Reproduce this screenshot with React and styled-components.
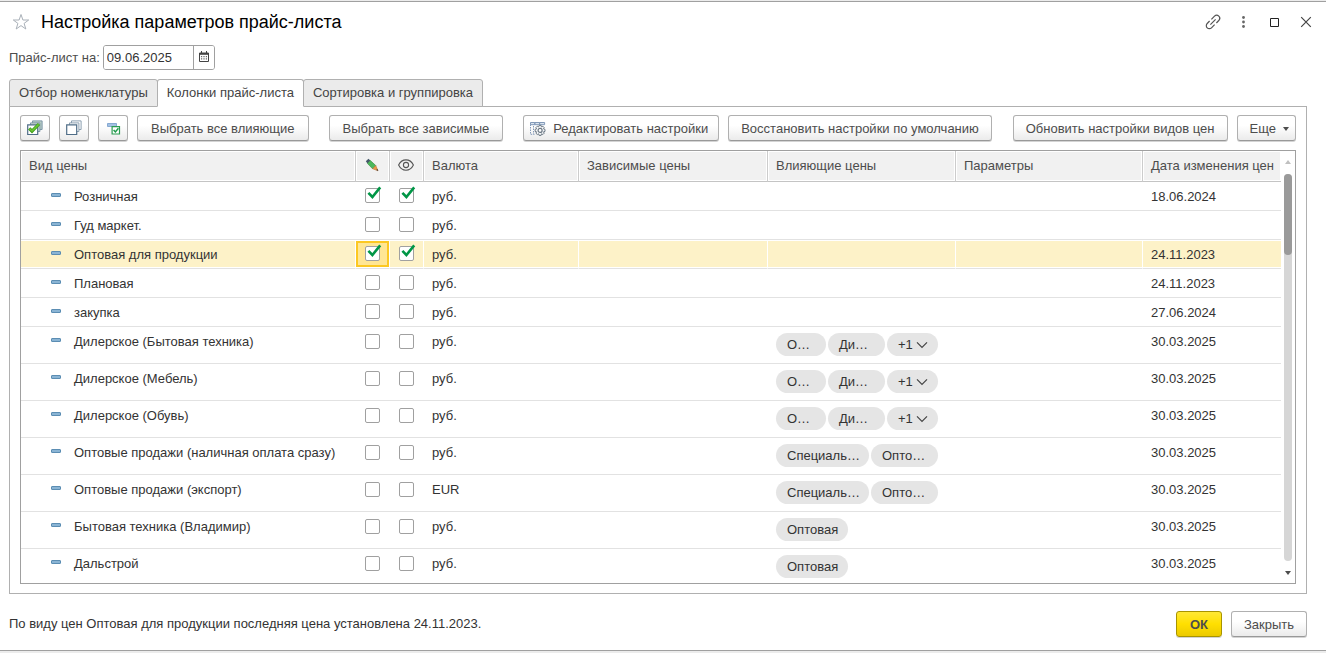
import React, { useState } from "react";
import styled, { createGlobalStyle, css } from "styled-components";

const Global = createGlobalStyle`
  *, *::before, *::after { box-sizing: border-box; }
  body {
    margin: 0;
    background: #ececec;
    color: #333;
    font: 13px/16px "Liberation Sans", Arial, sans-serif;
  }
  button, input { font: inherit; color: inherit; margin: 0; }
`;

const Window = styled.main`
  margin-top: 1px;
  padding: 0 19px 12px 9px;
  background: #fff;
  border-top: 1px solid #a0a0a0;
  border-bottom: 1px solid #a0a0a0;
`;

const TitleBar = styled.header`
  display: flex;
  align-items: center;
  height: 43px;
  margin-right: -9px;
  padding: 0 0 3px 1px;
  gap: 10px;
`;

const Title = styled.h1`
  flex: 1;
  margin: 0;
  font-size: 18px;
  line-height: 22px;
  font-weight: 400;
  color: #000;
`;

const IconButton = styled.button`
  display: flex;
  align-items: center;
  justify-content: center;
  width: 21px;
  height: 22px;
  padding: 0;
  border: 0;
  background: none;
  color: #444;
`;

const DateRow = styled.div`
  display: flex;
  align-items: center;
  gap: 3px;
  color: #4d4d4d;
`;

const DateField = styled.div`
  display: flex;
  width: 112px;
  height: 25px;
  border: 1px solid #a0a0a0;
  border-radius: 3px;
  overflow: hidden;
`;

const DateInput = styled.input`
  flex: 1;
  min-width: 0;
  padding: 0 3px;
  border: 0;
  outline: 0;
  color: #333;
`;

const DateButton = styled.button`
  display: flex;
  align-items: center;
  justify-content: center;
  width: 21px;
  padding: 0 0 2px;
  border: 0;
  border-left: 1px solid #a0a0a0;
  background: #fff;
`;

const Tabs = styled.div`
  display: flex;
  margin-top: 9px;
`;

const Tab = styled.button`
  height: 28px;
  margin-bottom: -1px;
  padding: 0 9px;
  border: 1px solid #b0b0b0;
  border-radius: 3px 3px 0 0;
  background: #ebebeb;
  color: #444;
  & + & { margin-left: -1px; }
  ${(p) => p.$active && css`
    position: relative;
    background: #fff;
    border-bottom-color: #fff;
  `}
`;

const Panel = styled.section`
  padding: 8px 10px 9px;
  border: 1px solid #b0b0b0;
`;

const Toolbar = styled.div`
  display: flex;
  gap: 20px;
  margin-bottom: 9px;
`;

const Group = styled.div`
  display: flex;
  gap: 9px;
  &:last-child { margin-left: auto; }
`;

const buttonPadding = {
  text: "1px 13px 0",
  wide: "1px 12px 0",
  icon: "0 6px",
  iconText: "1px 10px 0 6px",
  menu: "1px 6px 0 12px",
};

const Button = styled.button`
  display: flex;
  align-items: center;
  justify-content: center;
  gap: 7px;
  height: 26px;
  padding: ${(p) => buttonPadding[p.$kind || "text"]};
  border: 1px solid #b0b0b0;
  border-bottom-color: #999;
  border-radius: 3px;
  background: linear-gradient(#fff 40%, #ebebeb);
  box-shadow: 0 1px 0 #d4d4d4;
  color: #4d4d4d;
  white-space: nowrap;
  ${(p) => p.$primary && css`
    border-color: #a89400;
    background: linear-gradient(#ffe836, #ffdf00 50%, #ecca00);
    font-weight: 700;
  `}
`;

const TableFrame = styled.div`
  display: flex;
  border: 1px solid #a0a0a0;
`;

const Table = styled.table`
  flex: 1;
  width: 0;
  table-layout: fixed;
  border-collapse: separate;
  border-spacing: 0;
`;

const Head = styled.th`
  height: 31px;
  padding: 0 8px;
  border-right: 1px solid #ccc;
  border-bottom: 1px solid #c4c4c4;
  background: #f1f1f1;
  box-shadow: inset 0 0 0 1px #fff;
  color: #4d4d4d;
  font-weight: 400;
  text-align: left;
  white-space: nowrap;
  &:last-child { border-right: 0; }
  svg { display: block; margin: 0 auto; }
  ${(p) => p.$icon && css`padding: 0 2px 3px 0;`}
`;

const cellPadding = {
  text: "7px 8px 0",
  chips: "6px 8px 0",
  check: "6px 9px 0",
  checkTall: "7px 9px 0",
};

const Cell = styled.td`
  padding: ${(p) => cellPadding[p.$kind || "text"]};
  border-bottom: 1px solid #e2e2e2;
  vertical-align: top;
  white-space: nowrap;
`;

const Row = styled.tr`
  height: ${(p) => (p.$tall ? 37 : 29)}px;
  ${(p) => p.$selected && css`
    ${Cell} {
      background: #fdf2c8;
      border-right: 1px solid #fff;
      box-shadow: inset 0 1px #fff, inset 0 -1px #fff;
    }
    ${Cell}:nth-child(2) {
      background: #ffe694;
      box-shadow: inset 0 1px #fff, inset 0 -1px #fff, inset 2px 0 #fcc822,
        inset -2px 0 #fcc822, inset 0 3px #fcc822, inset 0 -3px #fcc822;
    }
    ${Cell}:last-child { border-right: 0; }
  `}
  &:last-child { height: 34px; }
  &:last-child ${Cell} { border-bottom: 0; }
`;

const NameLine = styled.div`
  display: flex;
  padding-left: 22px;
  gap: 13px;
`;

const Dash = styled.i`
  width: 10px;
  height: 4px;
  margin-top: 4px;
  border: 1px solid #5b8db3;
  border-radius: 1px;
  background: #8ab4d4;
`;

const CheckWrap = styled.label`
  display: block;
  position: relative;
  width: 15px;
  height: 15px;
  svg {
    position: absolute;
    left: 2px;
    top: -2px;
    pointer-events: none;
  }
`;

const CheckInput = styled.input`
  display: block;
  appearance: none;
  width: 15px;
  height: 15px;
  border: 1px solid #a0a0a0;
  border-radius: 2px;
  background: #fff;
`;

const Chips = styled.div`
  display: flex;
  gap: 2px;
`;

const Chip = styled.span`
  display: flex;
  align-items: center;
  gap: 3px;
  width: ${(p) => p.$w}px;
  height: 23px;
  padding-left: 11px;
  border-radius: 12px;
  background: #e5e5e5;
`;

const Scrollbar = styled.div`
  display: flex;
  flex-direction: column;
  align-items: center;
  width: 14px;
  padding: 9px 0 8px;
`;

const Track = styled.div`
  flex: 1;
  width: 8px;
  margin: 10px 0;
  border-radius: 4px;
  background: #d6d6d6;
`;

const Thumb = styled.div`
  height: 21%;
  border-radius: 4px;
  background: #9a9a9a;
`;

const Footer = styled.footer`
  display: flex;
  align-items: center;
  gap: 9px;
  margin-top: 17px;
  padding-bottom: 1px;
`;

const Status = styled.p`
  flex: 1;
  margin: 0;
`;

const StarIcon = () => (
  <svg width="18" height="18" viewBox="0 0 18 18" fill="none" stroke="#a9b0b8">
    <path d="M9 1.5 10.9 7H16.7L12.1 10.4 13.8 16 9 12.6 4.2 16 5.9 10.4 1.3 7H7.1Z" />
  </svg>
);

const LinkIcon = () => (
  <svg width="16" height="16" viewBox="0 0 16 16" fill="none" stroke="#555" strokeWidth="1.2">
    <path d="M6.4 5.4 9.5 2.2a3 3 0 0 1 4.3 4.3L11.4 9M9.6 10.6 6.5 13.8a3 3 0 0 1-4.3-4.3L4.6 7M5.4 10.6l5.2-5.2" />
  </svg>
);

const DotsIcon = () => (
  <svg width="3" height="12" viewBox="0 0 3 12" fill="#666">
    <circle cx="1.5" cy="1.5" r="1.4" /><circle cx="1.5" cy="6" r="1.4" /><circle cx="1.5" cy="10.5" r="1.4" />
  </svg>
);

const SquareIcon = () => (
  <svg width="9" height="9" viewBox="0 0 9 9" fill="none" stroke="#222">
    <path d="M.5.5h8v8h-8z" />
  </svg>
);

const CloseIcon = () => (
  <svg width="12" height="12" viewBox="0 0 12 12" stroke="#444" strokeWidth="1.2">
    <path d="M1.2 1.2 10.8 10.8M10.8 1.2 1.2 10.8" />
  </svg>
);

const CalendarIcon = () => (
  <svg width="10" height="11" viewBox="0 0 10 11" fill="none" stroke="#444">
    <path d="M.5 2h9v8.5h-9zM0 2.5h10M0 3.3h10M2.5 0v2M7.5 0v2" />
    <path d="M2 5.7h6.2M2 7.9h6.2" strokeDasharray="1.2 1.2" />
  </svg>
);

const CheckAllIcon = () => (
  <svg width="16" height="16" viewBox="0 0 16 16" fill="none">
    <path d="M5.5 3V.9h9.6v8.6H13" fill="#b9cfc4" stroke="#7d96a8" />
    <path d="M3.5 4.8V2.9h9.4v8.6H11" fill="#cfe0d2" stroke="#7d96a8" />
    <path d="M.7 4.9h10v9.6H.7z" fill="#fff" stroke="#4f6d87" strokeWidth="1.2" />
    <path d="M2.2 8.4 5 11.2 12 4" stroke="#3c9a1c" strokeWidth="3.2" />
    <path d="M2.6 8.8 5 11 11.6 4.4" stroke="#6cc832" strokeWidth="1.5" />
  </svg>
);

const UncheckAllIcon = () => (
  <svg width="16" height="16" viewBox="0 0 16 16" fill="#fff">
    <path d="M5.5 3V.9h9.6v8.6H13M3.5 4.8V2.9h9.4v8.6H11" stroke="#8b9fb0" />
    <path d="M.7 4.9h10v9.6H.7z" stroke="#4f6d87" strokeWidth="1.2" />
  </svg>
);

const RowCheckIcon = () => (
  <svg width="16" height="16" viewBox="0 0 16 16" fill="none">
    <path d="M2.5 3.5h9v3h-9z" fill="#a3c1e2" stroke="#86a9d2" />
    <path d="M7.1 6.6h7.4v7.4H7.1z" fill="#fff" stroke="#2a9c50" strokeWidth="1.2" />
    <path d="m8.6 10 1.8 1.9 3-3.7" stroke="#1f9a4a" strokeWidth="1.5" />
  </svg>
);

const SettingsIcon = () => (
  <svg width="16" height="16" viewBox="0 0 16 16" fill="none">
    <path d="M.5 1.5h4.3v2.2H.5zM4.8 1.5h4.8v2.2H4.8zM9.6 1.5h5v2.2h-5z" fill="#dbe5f0" stroke="#8299b8" />
    <path d="M.5 3.5v9.8h4M3.5 5v8" stroke="#8299b8" strokeDasharray="1.5 1" />
    <path d="m9.1 4.4 2 0 .4 1.5 1.4-.7 1.3 1.4-.7 1.3 1.5.5v2l-1.5.4.7 1.4-1.3 1.3-1.4-.7-.4 1.6H9.1l-.5-1.6-1.3.7-1.4-1.3.7-1.4-1.5-.4v-2l1.5-.5-.7-1.3 1.4-1.4 1.3.7z" fill="#f4f6f8" stroke="#6d7985" />
    <circle cx="10.1" cy="9.4" r="2" fill="#fff" stroke="#6d7985" strokeWidth="1.2" />
  </svg>
);

const PencilIcon = () => (
  <svg width="14" height="14" viewBox="0 0 14 14">
    <path d="M.8 3.2 3.4.8 5.4 2.6 2.5 5.5Z" fill="#46586a" />
    <path d="M2.5 5.5 5.4 2.6 10.8 7.6 7.6 10.8Z" fill="#4cb85c" stroke="#34883a" strokeWidth=".6" />
    <path d="m7.6 10.8 3.2-3.2 2.2 5.2Z" fill="#e99a48" stroke="#ad6933" strokeWidth=".5" />
    <path d="m11.3 11.9 1.1-.8.9 1.9Z" fill="#333" />
  </svg>
);

const EyeIcon = () => (
  <svg width="16" height="12" viewBox="0 0 16 12" fill="none" stroke="#555" strokeWidth="1.1">
    <path d="M.6 6C4 -.9 12 -.9 15.4 6 12 12.9 4 12.9.6 6Z" />
    <circle cx="8" cy="6" r="2.6" />
  </svg>
);

const Mark = () => (
  <svg width="15" height="15" viewBox="0 0 15 15" fill="none" stroke="#009646" strokeWidth="2.6">
    <path d="M1.4 6.8 5.4 11 13.2 1.4" />
  </svg>
);

const Chevron = () => (
  <svg width="12" height="8" viewBox="0 0 12 8" fill="none" stroke="#444" strokeWidth="1.2">
    <path d="m1 1.4 5 5 5-5" />
  </svg>
);

const Caret = ({ up, color = "#4d4d4d" }) => (
  <svg width="6" height="4" viewBox="0 0 6 4" fill={color}>
    <path d={up ? "M0 4 3 0 6 4Z" : "M0 0h6L3 4Z"} />
  </svg>
);

const dealer = [["О…", 50], ["Ди…", 57], ["+1", 51, true]];
const special = [["Специаль…", 93], ["Опто…", 67]];
const wholesale = [["Оптовая", 72]];

const initialRows = [
  { name: "Розничная", on: true, cur: "руб.", date: "18.06.2024" },
  { name: "Гуд маркет.", cur: "руб.", date: "" },
  { name: "Оптовая для продукции", on: true, selected: true, cur: "руб.", date: "24.11.2023" },
  { name: "Плановая", cur: "руб.", date: "24.11.2023" },
  { name: "закупка", cur: "руб.", date: "27.06.2024" },
  { name: "Дилерское (Бытовая техника)", cur: "руб.", chips: dealer, date: "30.03.2025" },
  { name: "Дилерское (Мебель)", cur: "руб.", chips: dealer, date: "30.03.2025" },
  { name: "Дилерское (Обувь)", cur: "руб.", chips: dealer, date: "30.03.2025" },
  { name: "Оптовые продажи (наличная оплата сразу)", cur: "руб.", chips: special, date: "30.03.2025" },
  { name: "Оптовые продажи (экспорт)", cur: "EUR", chips: special, date: "30.03.2025" },
  { name: "Бытовая техника (Владимир)", cur: "руб.", chips: wholesale, date: "30.03.2025" },
  { name: "Дальстрой", cur: "руб.", chips: wholesale, date: "30.03.2025" },
];

function Check({ initial, label }) {
  const [on, setOn] = useState(!!initial);
  return (
    <CheckWrap>
      <CheckInput type="checkbox" aria-label={label} checked={on} onChange={() => setOn(!on)} />
      {on && <Mark />}
    </CheckWrap>
  );
}

function PriceRow({ row }) {
  const checkKind = row.chips ? "checkTall" : "check";
  return (
    <Row $tall={!!row.chips} $selected={row.selected}>
      <Cell><NameLine><Dash />{row.name}</NameLine></Cell>
      <Cell $kind={checkKind}><Check initial={row.on} label={`Изменять: ${row.name}`} /></Cell>
      <Cell $kind={checkKind}><Check initial={row.on} label={`Показывать: ${row.name}`} /></Cell>
      <Cell>{row.cur}</Cell>
      <Cell />
      <Cell $kind="chips">
        {row.chips && (
          <Chips>
            {row.chips.map(([text, w, more]) => (
              <Chip key={text} $w={w}>{text}{more && <Chevron />}</Chip>
            ))}
          </Chips>
        )}
      </Cell>
      <Cell />
      <Cell>{row.date}</Cell>
    </Row>
  );
}

export default function App() {
  const [date, setDate] = useState("09.06.2025");
  return (
    <>
      <Global />
      <Window>
        <TitleBar>
          <IconButton aria-label="В избранное"><StarIcon /></IconButton>
          <Title>Настройка параметров прайс-листа</Title>
          <IconButton aria-label="Ссылка"><LinkIcon /></IconButton>
          <IconButton aria-label="Меню"><DotsIcon /></IconButton>
          <IconButton aria-label="Развернуть"><SquareIcon /></IconButton>
          <IconButton aria-label="Закрыть окно"><CloseIcon /></IconButton>
        </TitleBar>

        <DateRow>
          <label htmlFor="price-date">Прайс-лист на:</label>
          <DateField>
            <DateInput id="price-date" value={date} onChange={(e) => setDate(e.target.value)} />
            <DateButton aria-label="Календарь"><CalendarIcon /></DateButton>
          </DateField>
        </DateRow>

        <Tabs role="tablist">
          <Tab role="tab">Отбор номенклатуры</Tab>
          <Tab role="tab" aria-selected="true" $active>Колонки прайс-листа</Tab>
          <Tab role="tab">Сортировка и группировка</Tab>
        </Tabs>

        <Panel>
          <Toolbar>
            <Group>
              <Button $kind="icon" aria-label="Отметить все"><CheckAllIcon /></Button>
              <Button $kind="icon" aria-label="Снять отметки"><UncheckAllIcon /></Button>
              <Button $kind="icon" aria-label="Отметить строку"><RowCheckIcon /></Button>
              <Button>Выбрать все влияющие</Button>
            </Group>
            <Group><Button>Выбрать все зависимые</Button></Group>
            <Group>
              <Button $kind="iconText"><SettingsIcon />Редактировать настройки</Button>
              <Button $kind="wide">Восстановить настройки по умолчанию</Button>
            </Group>
            <Group>
              <Button $kind="wide">Обновить настройки видов цен</Button>
              <Button $kind="menu">Еще<Caret /></Button>
            </Group>
          </Toolbar>

          <TableFrame>
            <Table>
              <colgroup>
                <col />
                <col width="34" />
                <col width="34" />
                <col width="155" />
                <col width="189" />
                <col width="188" />
                <col width="187" />
                <col width="138" />
              </colgroup>
              <thead>
                <tr>
                  <Head>Вид цены</Head>
                  <Head $icon aria-label="Изменять"><PencilIcon /></Head>
                  <Head $icon aria-label="Показывать"><EyeIcon /></Head>
                  <Head>Валюта</Head>
                  <Head>Зависимые цены</Head>
                  <Head>Влияющие цены</Head>
                  <Head>Параметры</Head>
                  <Head>Дата изменения цен</Head>
                </tr>
              </thead>
              <tbody>
                {initialRows.map((row) => <PriceRow key={row.name} row={row} />)}
              </tbody>
            </Table>
            <Scrollbar>
              <Caret up color="#c0c0c0" />
              <Track><Thumb /></Track>
              <Caret />
            </Scrollbar>
          </TableFrame>
        </Panel>

        <Footer>
          <Status>По виду цен Оптовая для продукции последняя цена установлена 24.11.2023.</Status>
          <Button $primary>ОК</Button>
          <Button $kind="wide">Закрыть</Button>
        </Footer>
      </Window>
    </>
  );
}
